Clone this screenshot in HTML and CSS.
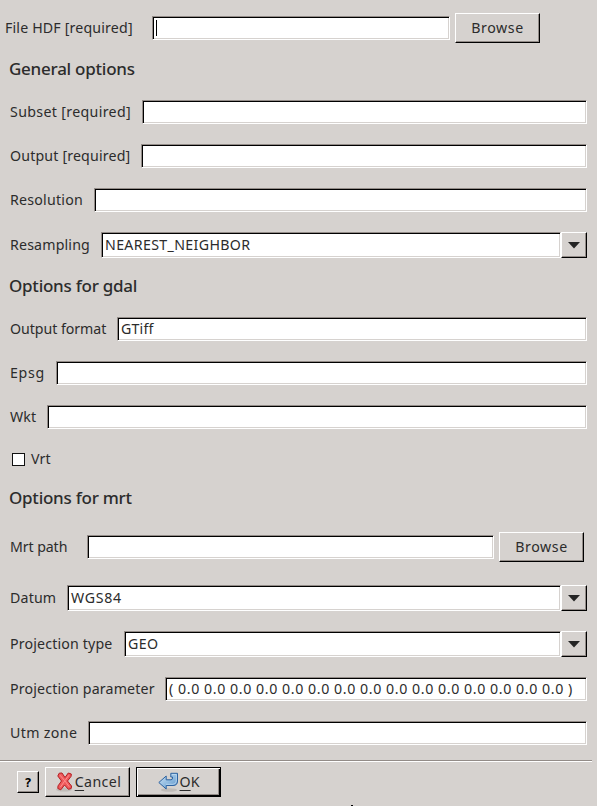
FILE: index.html
```html
<!DOCTYPE html>
<html lang="en">
<head>
<meta charset="utf-8">
<title>Import options</title>
<link rel="stylesheet" href="styles.css">
</head>
<body>
<form class="dialog">
  <div class="row file"><label>File HDF [required]</label><div class="field"><i class="caret"></i></div><button type="button" class="button"><span>Browse</span></button></div>
  <h2 class="h-general">General options</h2>
  <div class="row subset"><label>Subset [required]</label><div class="field"></div></div>
  <div class="row output"><label>Output [required]</label><div class="field"></div></div>
  <div class="row resolution"><label>Resolution</label><div class="field"></div></div>
  <div class="row combo resampling"><label>Resampling</label><div class="field"><span>NEAREST_NEIGHBOR</span></div><button type="button" class="arrow"><svg width="12" height="7"><path d="M0 0h12L6 6.5z"/></svg></button></div>
  <h2 class="h-gdal">Options for gdal</h2>
  <div class="row format"><label>Output format</label><div class="field"><span>GTiff</span></div></div>
  <div class="row epsg"><label>Epsg</label><div class="field"></div></div>
  <div class="row wkt"><label>Wkt</label><div class="field"></div></div>
  <div class="row check"><i class="box"></i><label>Vrt</label></div>
  <h2 class="h-mrt">Options for mrt</h2>
  <div class="row path"><label>Mrt path</label><div class="field"></div><button type="button" class="button"><span>Browse</span></button></div>
  <div class="row combo datum"><label>Datum</label><div class="field"><span>WGS84</span></div><button type="button" class="arrow"><svg width="12" height="7"><path d="M0 0h12L6 6.5z"/></svg></button></div>
  <div class="row combo type"><label>Projection type</label><div class="field"><span>GEO</span></div><button type="button" class="arrow"><svg width="12" height="7"><path d="M0 0h12L6 6.5z"/></svg></button></div>
  <div class="row param"><label>Projection parameter</label><div class="field"><span>( 0.0 0.0 0.0 0.0 0.0 0.0 0.0 0.0 0.0 0.0 0.0 0.0 0.0 0.0 0.0 )</span></div></div>
  <div class="row utm"><label>Utm zone</label><div class="field"></div></div>
  <div class="rule"></div>
  <div class="actions">
    <button type="button" class="help">?</button>
    <button type="button" class="button cancel">
      <svg width="18" height="20" viewBox="0 0 18 20"><ellipse cx="8" cy="17.6" rx="8" ry="2" fill="#aaa6a2" opacity=".5"/><path d="M3.2 1.2 6 1l3 4.5L12.3 1l3 1-.2 2.3L11.5 9l4 5-.3 2.5-2.8.8L8.5 13l-3.7 4.8-3-1.3.2-2.6L5.5 9 1.8 4z" fill="#ee5a5c" stroke="#b51d22" stroke-linejoin="round"/><path d="m4 3.2 4.8 5.6L13 3.2M8.7 9l-4.2 6M9 9l4.2 5.7" fill="none" stroke="#ff8d8d"/></svg>
      <span><u>C</u>ancel</span>
    </button>
    <button type="button" class="button ok">
      <svg width="22" height="20" viewBox="0 0 22 20"><defs><linearGradient id="blue" x2="1" y2="1"><stop stop-color="#d5e7f6"/><stop offset=".55" stop-color="#8db9df"/><stop offset="1" stop-color="#5b91c8"/></linearGradient></defs><ellipse cx="11" cy="18" rx="8" ry="1.7" fill="#aaa6a2" opacity=".5"/><path d="M.8 10.5 8.2 4v3.8H13q1.5 0 1.5-1.8V5h-1.7V1.3h6.7V9q0 4.5-4.5 4.5H8.2V17z" fill="url(#blue)" stroke="#2c62a0" stroke-linejoin="round"/><path d="M14 2.5h4.3V9q0 3-3.3 3.3H8" fill="none" stroke="#c5def3" stroke-width=".7"/></svg>
      <span><u>O</u>K</span>
    </button>
  </div>
  <i class="speck"></i>
</form>
</body>
</html>
```
FILE: styles.css
```css
* { box-sizing: border-box; }
body { margin: 0; background: #d6d2cf; color: #2c2c2c; font: 14.2px/20px "Noto Sans", sans-serif; overflow: hidden; }
.dialog { position: relative; width: 597px; height: 806px; padding-top: 13px; overflow: hidden; }
.row { display: flex; align-items: center; height: 24px; margin: 0 10px 20px; white-space: nowrap; font-weight: 400; }
.row label { flex: 0 0 auto; padding-bottom: 1px; letter-spacing: .16px; }
.field { flex: 1; min-width: 0; height: 24px; background: #fff; border: 1px solid; border-color: #938c88 #fff #fff #938c88; box-shadow: inset 1px 1px #000, inset -1px -1px #d6d2cf; padding: 1px 3px; overflow: hidden; }
.caret { display: block; width: 1px; height: 16px; margin: 2px 0 0; background: #000; }
.button, .arrow, .help { display: flex; align-items: center; justify-content: center; flex: none; padding: 0; margin: 0; border: 1px solid; border-color: #fff #000 #000 #fff; box-shadow: inset -1px -1px #938c88; background: #d6d2cf; color: #2c2c2c; font: inherit; }
.button { width: 85px; height: 30px; margin-left: 5px; letter-spacing: .6px; }
.button span { padding-bottom: 1px; }
.arrow { width: 26px; height: 26px; padding-right: 1px; }
.arrow svg { fill: #242424; }
.combo, .combo .field { height: 26px; }
.combo .field { padding-top: 2px; }
h2 { margin: 0 9px; font-size: 17px; font-weight: 500; letter-spacing: -.25px; }
.h-general { height: 57px; line-height: 52px; }
.h-gdal { height: 59px; line-height: 56px; }
.h-mrt { height: 63px; line-height: 58px; }
.file { height: 30px; margin: 0 57px 0 5px; }
.file label { width: 147px; }
.subset label { width: 132px; letter-spacing: .34px; }
.output label { width: 131px; }
.resolution label { width: 84px; letter-spacing: .22px; }
.resampling label { width: 91px; }
.resampling { margin-bottom: 0; }
.resampling .field { letter-spacing: .35px; }
.format label { width: 107px; letter-spacing: -.05px; }
.epsg label { width: 46px; letter-spacing: .7px; }
.wkt label { width: 37px; }
.check { height: 20px; margin-bottom: 0; }
.box { width: 13px; height: 13px; margin: 0 6px 0 2px; background: #fff; border: 1px solid #111; }
.path { height: 30px; margin: 0 13px 23px 10px; }
.path label { width: 77px; letter-spacing: -.1px; }
.datum label { width: 57px; }
.datum .field { letter-spacing: .7px; }
.format .field { letter-spacing: .2px; }
.type label { width: 114px; }
.type .field { letter-spacing: .4px; }
.param label { width: 155px; }
.param .field { letter-spacing: .57px; }
.utm { margin-bottom: 15px; }
.utm label { width: 78px; letter-spacing: .35px; }
.rule { width: 592px; height: 2px; border-top: 1px solid #938c88; border-bottom: 1px solid #fff; }
.actions { display: flex; align-items: center; height: 30px; margin: 5px 0 0 17px; }
.help { width: 22px; height: 22px; font: bold 13px "DejaVu Sans Mono", monospace; color: #000; }
.actions .cancel { margin-left: 6px; gap: 1px; padding-left: 2px; letter-spacing: .4px; }
.actions .ok { margin-left: 6px; border: 1px solid #000; box-shadow: inset 1px 1px #fff, inset -1px -1px #000, inset -2px -2px #938c88; gap: 0; letter-spacing: 0; }
u { text-underline-offset: 3px; text-decoration-thickness: 1px; text-decoration-skip-ink: none; }
.speck { position: absolute; left: 351px; top: 805px; width: 2px; height: 1px; background: #000; }
```
